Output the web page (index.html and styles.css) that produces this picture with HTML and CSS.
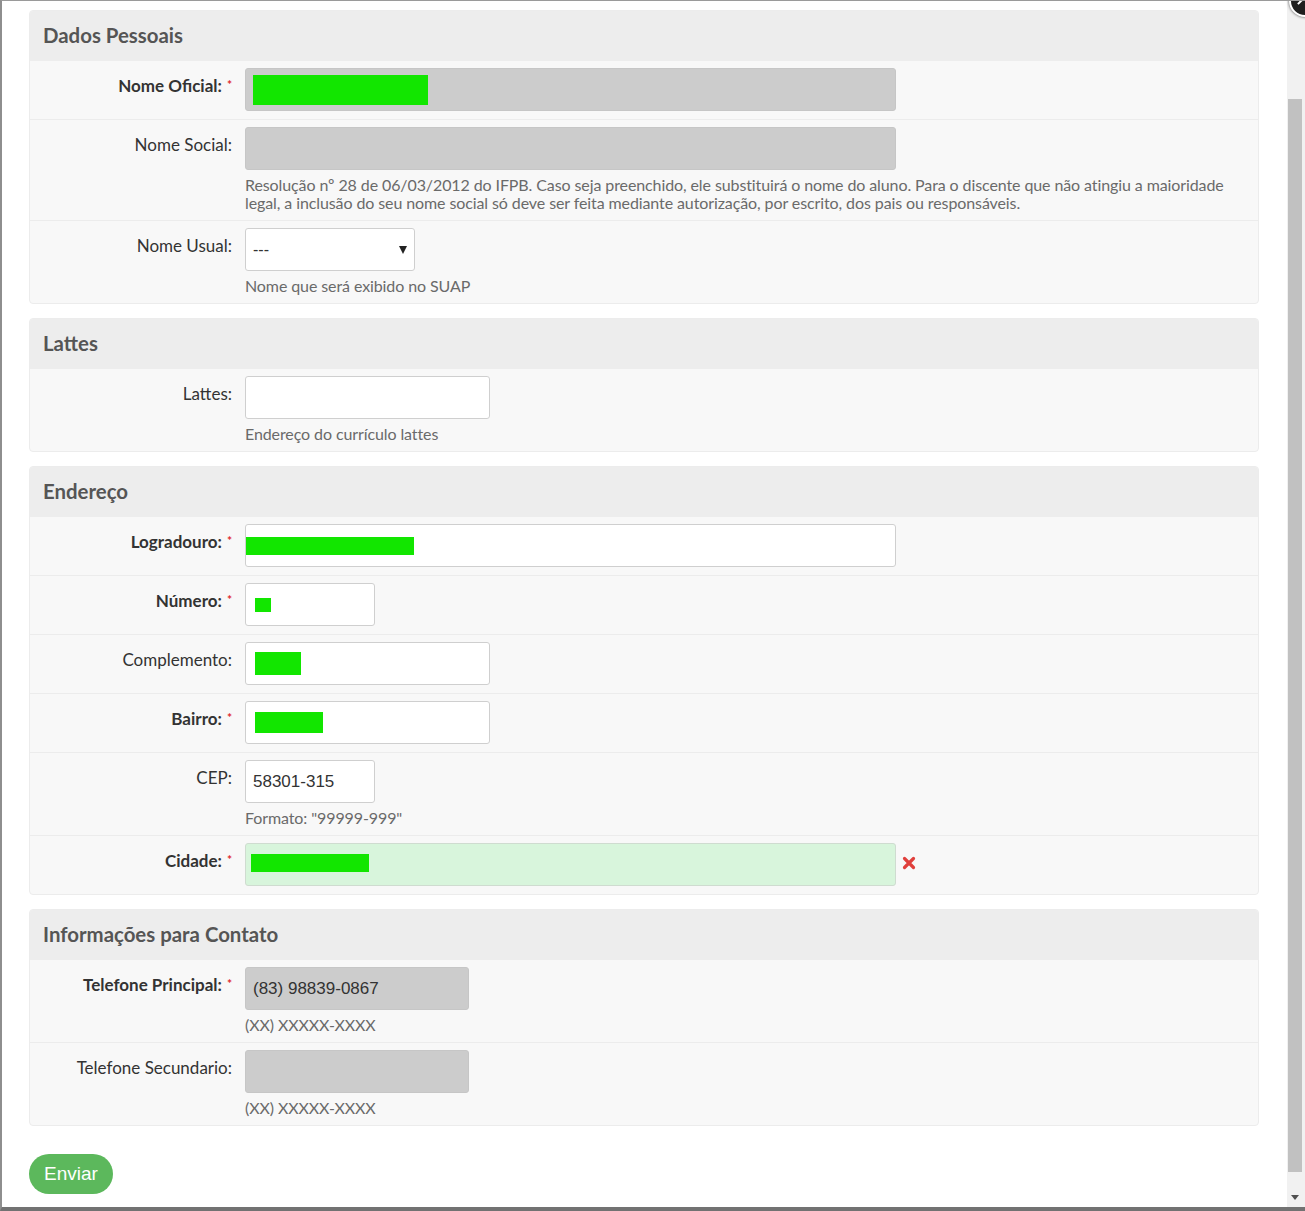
FILE: index.html
```html
<!DOCTYPE html>
<html lang="pt-BR">
<head>
<meta charset="utf-8">
<title>Dados Pessoais</title>
<link rel="stylesheet" href="styles.css">
</head>
<body>
<div class="modal">
  <div class="content">
    <section class="box">
      <h2 class="box-title">Dados Pessoais</h2>
      <div class="row">
        <label class="lbl req">Nome Oficial:<span class="ast">*</span></label>
        <div class="field">
          <div class="input w-lg disabled"><span class="redact r-oficial"></span></div>
        </div>
      </div>
      <div class="row">
        <label class="lbl">Nome Social:</label>
        <div class="field">
          <div class="input w-lg disabled"></div>
          <p class="help">Resolução nº 28 de 06/03/2012 do IFPB. Caso seja preenchido, ele substituirá o nome do aluno. Para o discente que não atingiu a maioridade legal, a inclusão do seu nome social só deve ser feita mediante autorização, por escrito, dos pais ou responsáveis.</p>
        </div>
      </div>
      <div class="row">
        <label class="lbl">Nome Usual:</label>
        <div class="field">
          <div class="input select w-sel"><span class="val">---</span><span class="caret"></span></div>
          <p class="help">Nome que será exibido no SUAP</p>
        </div>
      </div>
    </section>

    <section class="box">
      <h2 class="box-title">Lattes</h2>
      <div class="row">
        <label class="lbl">Lattes:</label>
        <div class="field">
          <div class="input w-md"></div>
          <p class="help">Endereço do currículo lattes</p>
        </div>
      </div>
    </section>

    <section class="box">
      <h2 class="box-title">Endereço</h2>
      <div class="row">
        <label class="lbl req">Logradouro:<span class="ast">*</span></label>
        <div class="field">
          <div class="input w-lg"><span class="redact r-log"></span></div>
        </div>
      </div>
      <div class="row">
        <label class="lbl req">Número:<span class="ast">*</span></label>
        <div class="field">
          <div class="input w-sm"><span class="redact r-num"></span></div>
        </div>
      </div>
      <div class="row">
        <label class="lbl">Complemento:</label>
        <div class="field">
          <div class="input w-md"><span class="redact r-comp"></span></div>
        </div>
      </div>
      <div class="row">
        <label class="lbl req">Bairro:<span class="ast">*</span></label>
        <div class="field">
          <div class="input w-md"><span class="redact r-bairro"></span></div>
        </div>
      </div>
      <div class="row">
        <label class="lbl">CEP:</label>
        <div class="field">
          <div class="input w-sm"><span class="val">58301-315</span></div>
          <p class="help">Formato: "99999-999"</p>
        </div>
      </div>
      <div class="row">
        <label class="lbl req">Cidade:<span class="ast">*</span></label>
        <div class="field field-inline">
          <div class="input w-lg success"><span class="redact r-cidade"></span></div>
          <svg class="clear" width="14" height="14" viewBox="0 0 14 14" aria-label="limpar"><path d="M2.5 2.5 L11.5 11.5 M11.5 2.5 L2.5 11.5" stroke="#e0403c" stroke-width="3.2" stroke-linecap="round"/></svg>
        </div>
      </div>
    </section>

    <section class="box">
      <h2 class="box-title">Informações para Contato</h2>
      <div class="row">
        <label class="lbl req">Telefone Principal:<span class="ast">*</span></label>
        <div class="field">
          <div class="input w-tel disabled"><span class="val">(83) 98839-0867</span></div>
          <p class="help">(XX) XXXXX-XXXX</p>
        </div>
      </div>
      <div class="row">
        <label class="lbl">Telefone Secundario:</label>
        <div class="field">
          <div class="input w-tel disabled"></div>
          <p class="help">(XX) XXXXX-XXXX</p>
        </div>
      </div>
    </section>

    <div class="actions">
      <button class="btn-submit" type="button">Enviar</button>
    </div>
  </div>
  <div class="scrollbar">
    <div class="thumb"></div>
    <div class="arrow-down"></div>
  </div>
  <div class="close-btn"><span class="close-x"></span></div>
</div>
</body>
</html>
```

FILE: styles.css
```css
* { box-sizing: border-box; }

html, body {
  margin: 0;
  padding: 0;
  background: #ffffff;
  overflow: hidden;
}

body {
  font-family: Lato, "Open Sans", "Liberation Sans", sans-serif;
  color: #333333;
}

.modal {
  position: relative;
  width: 1305px;
  height: 1211px;
  display: flex;
  border-left: 2px solid #8e8e8e;
  border-top: 1px solid #9a9a9a;
  border-bottom: 4px solid #727272;
  background: #ffffff;
  overflow: hidden;
}

.content {
  flex: 1;
  padding: 9px 28px 0 27px;
}

.box {
  border: 1px solid #ececec;
  border-radius: 4px;
  background: #f8f8f8;
  margin: 0 0 14px 0;
  overflow: hidden;
}

.box-title {
  margin: 0;
  height: 50px;
  line-height: 49px;
  padding-left: 13px;
  background: #ededed;
  font-size: 20.4px;
  font-weight: 700;
  color: #555555;
}

.row {
  display: grid;
  grid-template-columns: 215px 1fr;
  padding: 7px 0 8px 0;
  border-top: 1px solid #ececec;
}

.box-title + .row { border-top: none; }

.lbl {
  text-align: right;
  padding-right: 13px;
  padding-top: 8px;
  font-size: 17px;
  line-height: 20px;
  color: #333333;
  white-space: nowrap;
}

.lbl.req { font-weight: 700; }

.ast {
  color: #e0282e;
  font-size: 12px;
  vertical-align: top;
  position: relative;
  top: -1px;
  margin-left: 5px;
  font-weight: 700;
}

.field {
  padding-right: 10px;
}

.field-inline {
  display: flex;
  align-items: center;
  gap: 6px;
}

.input {
  height: 43px;
  border: 1px solid #cfcfcf;
  border-radius: 3px;
  background: #ffffff;
  display: flex;
  align-items: center;
  padding-left: 7px;
  font-family: "Liberation Sans", Arial, sans-serif;
  font-size: 17px;
  color: #333333;
}

.input.disabled {
  background: #cccccc;
  border-color: #c6c6c6;
}

.input.success {
  background: #d8f5dc;
  border-color: #cfdcd0;
}

.w-lg { width: 651px; }
.w-md { width: 245px; }
.w-sm { width: 130px; }
.w-sel { width: 170px; }
.w-tel { width: 224px; }

.select {
  justify-content: space-between;
  padding-right: 7px;
  font-size: 16px;
}

.caret {
  width: 0;
  height: 0;
  border-left: 4px solid transparent;
  border-right: 4px solid transparent;
  border-top: 8px solid #222222;
  margin-top: 1px;
}

.help {
  margin: 6px 0 0 0;
  font-size: 16px;
  line-height: 18px;
  color: #6a6a6a;
  letter-spacing: -0.1px;
}

.redact {
  display: block;
  background: #12e600;
}

.r-oficial { width: 175px; height: 30px; margin-left: 0; }
.r-log { width: 168px; height: 18px; margin-left: -7px; margin-top: 1px; }
.r-num { width: 16px; height: 14px; margin-left: 2px; }
.r-comp { width: 46px; height: 23px; margin-left: 2px; }
.r-bairro { width: 68px; height: 21px; margin-left: 2px; }
.r-cidade { width: 118px; height: 18px; margin-left: -2px; margin-top: -4px; }

.clear { display: block; margin-top: -4px; }

.actions {
  padding-top: 14px;
}

.btn-submit {
  height: 40px;
  width: 84px;
  border: none;
  border-radius: 20px;
  background: #5cb85c;
  color: #ffffff;
  font-family: "Liberation Sans", Arial, sans-serif;
  font-size: 19px;
  padding: 0;
}

.scrollbar {
  width: 18px;
  background: #f1f1f1;
  position: relative;
  padding: 98px 3px 0 1px;
}

.thumb {
  height: 1073px;
  background: #c1c1c1;
}

.arrow-down {
  position: absolute;
  left: 4px;
  bottom: 7px;
  width: 0;
  height: 0;
  border-left: 4px solid transparent;
  border-right: 4px solid transparent;
  border-top: 5px solid #505050;
}

.close-btn {
  position: absolute;
  right: -16px;
  top: -16px;
  width: 32px;
  height: 32px;
  border-radius: 50%;
  background: #1e1e1e;
  border: 2px solid #ffffff;
  box-shadow: 0 0 3px rgba(0,0,0,0.7);
}

.close-x {
  position: absolute;
  left: 6px;
  top: 14px;
  width: 6px;
  height: 2px;
  background: #ffffff;
  transform: rotate(-45deg);
}
```
